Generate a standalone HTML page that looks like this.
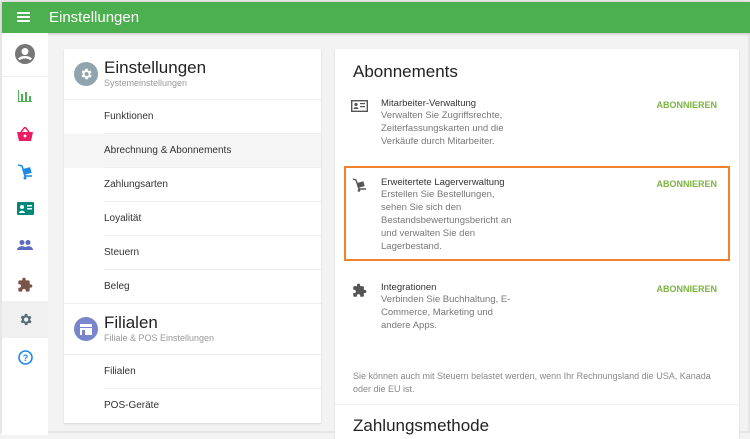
<!DOCTYPE html><html><head><meta charset="utf-8"><style>
*{margin:0;padding:0;box-sizing:border-box}
body{width:750px;height:433px;overflow:hidden;background:#f3f3f3;font-family:"Liberation Sans",sans-serif;position:relative;border:2px solid #e6e6e6}
.hdr{position:absolute;left:0;top:0;width:748px;height:31px;background:#4caf50;box-shadow:0 1px 3px rgba(0,0,0,.2);color:#fff;font-size:15px}
.side{position:absolute;left:0;top:31px;width:46px;height:402px;background:#fff}
.ic{position:absolute;left:0;width:46px;display:flex;justify-content:center;align-items:center}
.card{position:absolute;background:#fff;box-shadow:0 1px 2px rgba(0,0,0,.12)}
.it{position:absolute;left:40px;right:0;height:34px;border-bottom:1px solid #eee;font-size:10px;color:#333;line-height:34px}
.ht{position:absolute;left:40px;font-size:17px;color:#222}
.hs{position:absolute;left:40px;font-size:9px;color:#999}
.t{position:absolute;left:46px;font-size:9.5px;color:#333}
.d{position:absolute;left:46px;font-size:9.5px;color:#777;line-height:13px;width:135px}
.ab{position:absolute;right:22px;font-size:9px;font-weight:bold;color:#7cb342}
</style></head><body>
<div class="hdr"><div style="position:absolute;left:15px;top:10px;width:13px;height:2px;background:#fff;box-shadow:0 4px #fff,0 8px #fff"></div><span style="position:absolute;left:47px;top:7px">Einstellungen</span></div>
<div class="side">
<div class="ic" style="top:11px"><svg width="20" height="20" viewBox="0 0 20 20"><circle cx="10" cy="10" r="10" fill="#777"/><circle cx="10" cy="7.5" r="3.5" fill="#fff"/><path d="M4 15.5c2-3 10-3 12 0" stroke="#fff" stroke-width="2.5" fill="none"/></svg></div>
<div style="position:absolute;top:43px;left:0;width:46px;height:1px;background:#eee"></div>
<div class="ic" style="top:57px"><svg width="14" height="12"><path d="M0 0v12h14" stroke="#4caf50" stroke-width="2" fill="none"/><rect x="3" y="4" width="2" height="7" fill="#4caf50"/><rect x="7" y="2" width="2" height="9" fill="#4caf50"/><rect x="11" y="6" width="2" height="5" fill="#4caf50"/></svg></div>
<div class="ic" style="top:94px"><svg width="16" height="14"><path d="M0 5h16l-2 9H2z" fill="#e91e63"/><path d="M4 5l4-5 4 5" stroke="#e91e63" stroke-width="1.5" fill="none"/><circle cx="8" cy="9" r="1.4" fill="#fff"/></svg></div>
<div class="ic" style="top:131px"><svg width="16" height="16"><path d="M1 1l4 1 3 10h7" stroke="#1e88e5" stroke-width="1.6" fill="none"/><rect x="6" y="4" width="8" height="6" fill="#1e88e5" transform="rotate(-15 10 7)"/><circle cx="8" cy="14" r="1.5" fill="#1e88e5"/></svg></div>
<div class="ic" style="top:169px"><svg width="17" height="13"><rect width="17" height="13" rx="1" fill="#00897b"/><circle cx="5" cy="5" r="2" fill="#fff"/><path d="M2 11c0-3 6-3 6 0z" fill="#fff"/><rect x="10" y="3" width="5" height="1.5" fill="#fff"/><rect x="10" y="6" width="5" height="1.5" fill="#fff"/></svg></div>
<div class="ic" style="top:207px"><svg width="16" height="10"><circle cx="5" cy="2.5" r="2.5" fill="#5c6bc0"/><circle cx="11" cy="2.5" r="2.5" fill="#5c6bc0"/><path d="M0 10c0-5 10-5 10 0zM7 10c0-5 9-5 9 0z" fill="#5c6bc0"/></svg></div>
<div class="ic" style="top:244px"><svg width="16" height="16" viewBox="0 0 24 24"><path fill="#795548" d="M20.5 11H19V7a2 2 0 0 0-2-2h-4V3.5a2.5 2.5 0 0 0-5 0V5H4a2 2 0 0 0-2 2v3.8h1.5c1.5 0 2.7 1.2 2.7 2.7S5 16.2 3.5 16.2H2V20a2 2 0 0 0 2 2h3.8v-1.5c0-1.5 1.2-2.7 2.7-2.7s2.7 1.2 2.7 2.7V22H17a2 2 0 0 0 2-2v-4h1.5a2.5 2.5 0 0 0 0-5z"/></svg></div>
<div style="position:absolute;top:268px;left:0;width:46px;height:37px;background:#f0f0f0"></div>
<div class="ic" style="top:279px"><svg width="15" height="15" viewBox="0 0 24 24"><path fill="#546e7a" d="M19.4 13c0-.3.1-.6.1-1s0-.7-.1-1l2.1-1.6-2-3.5-2.5 1a7 7 0 0 0-1.7-1L15 3h-4l-.4 2.6a7 7 0 0 0-1.7 1l-2.5-1-2 3.5L6.5 11c0 .3-.1.6-.1 1s0 .7.1 1l-2.1 1.6 2 3.5 2.5-1c.5.4 1.1.7 1.7 1L11 21h4l.4-2.6c.6-.3 1.2-.6 1.7-1l2.5 1 2-3.5zM13 15.5a3.5 3.5 0 1 1 0-7 3.5 3.5 0 0 1 0 7z"/></svg></div>
<div class="ic" style="top:317px"><svg width="15" height="15"><circle cx="7.5" cy="7.5" r="6.5" stroke="#1e88e5" stroke-width="1.6" fill="none"/><text x="7.5" y="11" font-size="9" font-weight="bold" fill="#1e88e5" text-anchor="middle" font-family="Liberation Sans">?</text></svg></div>
</div>
<div class="card" style="left:62px;top:47px;width:257px;height:374px">
<div style="position:absolute;left:10px;top:13px;width:24px;height:24px;border-radius:50%;background:#90a4ae;display:flex;align-items:center;justify-content:center"><svg width="14" height="14" viewBox="0 0 24 24"><path fill="#fff" d="M19.4 13c0-.3.1-.6.1-1s0-.7-.1-1l2.1-1.6-2-3.5-2.5 1a7 7 0 0 0-1.7-1L15 3h-4l-.4 2.6a7 7 0 0 0-1.7 1l-2.5-1-2 3.5L6.5 11c0 .3-.1.6-.1 1s0 .7.1 1l-2.1 1.6 2 3.5 2.5-1c.5.4 1.1.7 1.7 1L11 21h4l.4-2.6c.6-.3 1.2-.6 1.7-1l2.5 1 2-3.5zM13 15.5a3.5 3.5 0 1 1 0-7 3.5 3.5 0 0 1 0 7z"/></svg></div>
<div class="ht" style="top:9px">Einstellungen</div><div class="hs" style="top:29px">Systemeinstellungen</div>
<div style="position:absolute;left:0;right:0;top:50px;height:1px;background:#eee"></div>
<div class="it" style="top:51px">Funktionen</div>
<div style="position:absolute;left:0;right:0;top:85px;height:34px;background:#f5f5f5"></div>
<div class="it" style="top:85px">Abrechnung &amp; Abonnements</div>
<div class="it" style="top:119px">Zahlungsarten</div>
<div class="it" style="top:153px">Loyalität</div>
<div class="it" style="top:187px">Steuern</div>
<div class="it" style="top:221px;left:0;padding-left:40px">Beleg</div>
<div style="position:absolute;left:10px;top:268px;width:24px;height:24px;border-radius:50%;background:#7986cb;display:flex;align-items:center;justify-content:center"><svg width="12" height="11"><rect width="12" height="3" fill="#fff"/><rect y="4" width="12" height="7" fill="#fff"/><rect x="2" y="6" width="3" height="5" fill="#7986cb"/></svg></div>
<div class="ht" style="top:264px">Filialen</div><div class="hs" style="top:284px">Filiale &amp; POS Einstellungen</div>
<div style="position:absolute;left:0;right:0;top:305px;height:1px;background:#eee"></div>
<div class="it" style="top:306px">Filialen</div>
<div class="it" style="top:340px;border:none">POS-Geräte</div>
</div>
<div class="card" style="left:333px;top:47px;width:404px;height:390px">
<div style="position:absolute;left:18px;top:13px;font-size:17px;color:#222">Abonnements</div>
<svg style="position:absolute;left:16px;top:51px" width="17" height="12"><rect x=".7" y=".7" width="15.6" height="10.6" fill="none" stroke="#555" stroke-width="1.4"/><circle cx="5" cy="4.5" r="1.6" fill="#555"/><path d="M2.5 9c0-2.5 5-2.5 5 0z" fill="#555"/><rect x="9" y="3" width="5" height="1.2" fill="#555"/><rect x="9" y="6" width="5" height="1.2" fill="#555"/></svg>
<div class="t" style="top:49px">Mitarbeiter-Verwaltung</div>
<div class="d" style="top:60px">Verwalten Sie Zugriffsrechte, Zeiterfassungskarten und die Verkäufe durch Mitarbeiter.</div>
<div class="ab" style="top:51px">ABONNIEREN</div>
<div style="position:absolute;left:9px;top:117px;width:386px;height:95px;border:2.5px solid #f0812f"></div>
<svg style="position:absolute;left:17px;top:129px" width="15" height="14"><path d="M1 1l3 1 3 9h7" stroke="#555" stroke-width="1.4" fill="none"/><rect x="5" y="4" width="7" height="5" fill="#555" transform="rotate(-15 9 6)"/><circle cx="7" cy="12.5" r="1.3" fill="#555"/></svg>
<div class="t" style="top:128px">Erweitertete Lagerverwaltung</div>
<div class="d" style="top:139px">Erstellen Sie Bestellungen, sehen Sie sich den Bestandsbewertungsbericht an und verwalten Sie den Lagerbestand.</div>
<div class="ab" style="top:130px">ABONNIEREN</div>
<svg style="position:absolute;left:17px;top:234px" width="15" height="15" viewBox="0 0 24 24"><path fill="#555" d="M20.5 11H19V7a2 2 0 0 0-2-2h-4V3.5a2.5 2.5 0 0 0-5 0V5H4a2 2 0 0 0-2 2v3.8h1.5c1.5 0 2.7 1.2 2.7 2.7S5 16.2 3.5 16.2H2V20a2 2 0 0 0 2 2h3.8v-1.5c0-1.5 1.2-2.7 2.7-2.7s2.7 1.2 2.7 2.7V22H17a2 2 0 0 0 2-2v-4h1.5a2.5 2.5 0 0 0 0-5z"/></svg>
<div class="t" style="top:233px">Integrationen</div>
<div class="d" style="top:244px">Verbinden Sie Buchhaltung, E-Commerce, Marketing und andere Apps.</div>
<div class="ab" style="top:235px">ABONNIEREN</div>
<div style="position:absolute;left:18px;top:321px;width:370px;font-size:9px;color:#888;line-height:13px">Sie können auch mit Steuern belastet werden, wenn Ihr Rechnungsland die USA, Kanada oder die EU ist.</div>
<div style="position:absolute;left:0;right:0;top:355px;height:1px;background:#eee"></div>
<div style="position:absolute;left:18px;top:367px;font-size:17px;color:#222">Zahlungsmethode</div>
</div>
</body></html>
